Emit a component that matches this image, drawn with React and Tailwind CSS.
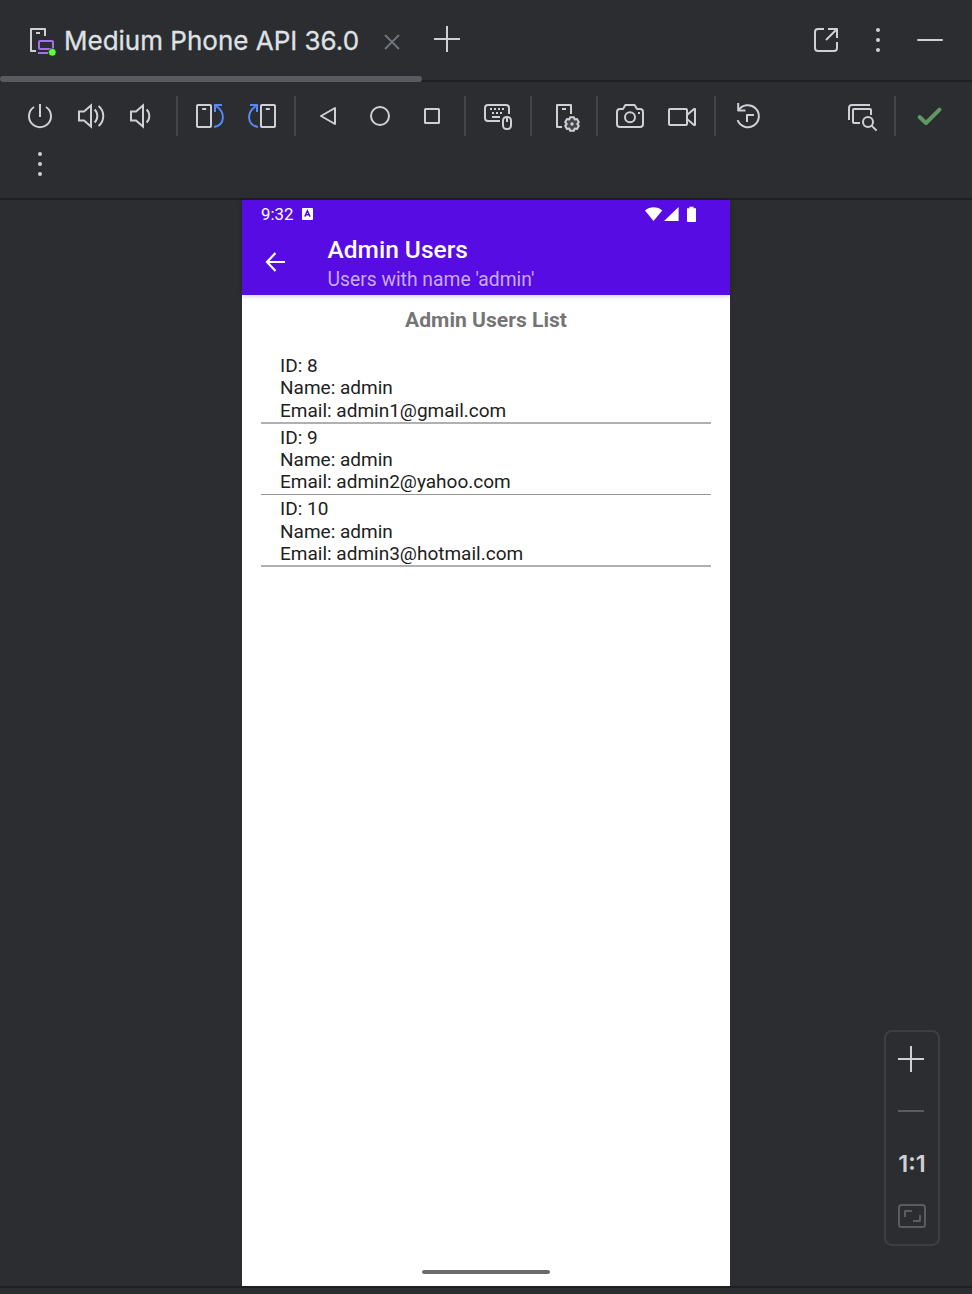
const FG = "#ced0d6";

function Icon({ children, className = "" }) {
  return (
    <svg
      viewBox="0 0 32 32"
      className={`h-8 w-8 shrink-0 ${className}`}
      fill="none"
      stroke={FG}
      strokeWidth="2"
      strokeLinejoin="round"
    >
      {children}
    </svg>
  );
}

function Tool({ children, label }) {
  return (
    <button aria-label={label} className="flex h-[52px] w-[52px] shrink-0 items-center justify-center">
      <Icon>{children}</Icon>
    </button>
  );
}

function Separator() {
  return <div className="mx-1.5 h-10 w-0.5 shrink-0 bg-[#43454a]" />;
}

function Dots() {
  return (
    <g fill={FG} stroke="none">
      <circle cx="16" cy="6" r="2" />
      <circle cx="16" cy="16" r="2" />
      <circle cx="16" cy="26" r="2" />
    </g>
  );
}

function RotateShape() {
  return (
    <>
      <rect x="3" y="5" width="14" height="22" rx="1" />
      <path d="M8.2 9h4" />
      <g stroke="#548af7" strokeLinejoin="miter">
        <path d="M28 5h-7v7" />
        <path d="M22 6C31.5 12 31.5 25 20 27" />
      </g>
    </>
  );
}

function gearPoints(cx, cy) {
  const pts = [];
  for (let k = 0; k < 6; k++) {
    for (const [offset, r] of [[-15, 7.1], [15, 7.1], [30, 5.3]]) {
      const a = ((60 * k + offset - 90) * Math.PI) / 180;
      pts.push(`${(cx + r * Math.cos(a)).toFixed(2)},${(cy + r * Math.sin(a)).toFixed(2)}`);
    }
  }
  return pts.join(" ");
}

function TabBar() {
  return (
    <header className="flex h-[82px] shrink-0 flex-col justify-between border-b-2 border-[#1e1f22]">
      <div className="flex h-20 shrink-0 items-center px-[26px]">
        <Icon>
          <path d="M10 27H5V5h14v7" />
          <path d="M10 9h4" />
          <rect x="13" y="17" width="14" height="8" rx="1" stroke="#a571e6" />
          <path d="M12 29h10" stroke="#a571e6" />
          <circle cx="26.3" cy="28.3" r="3.9" fill="#5fff3d" stroke="#1f3d22" strokeWidth="0.8" />
        </Icon>
        <span className="ml-1.5 w-[300px] pt-0.5 text-[26px] leading-8 whitespace-nowrap text-[#dfe1e5] [-webkit-text-stroke:0.3px_#dfe1e5]">
          Medium Phone API 36.0
        </span>
        <Icon className="ml-3">
          <path d="M9 11l14 14M23 11l-14 14" stroke="#6f737a" />
        </Icon>
        <Icon className="ml-[23px]">
          <path d="M16 2v26M3 15h26" />
        </Icon>
        <div className="flex-1" />
        <Icon className="mr-5">
          <path d="M14 5H8a3 3 0 0 0-3 3v16a3 3 0 0 0 3 3h16a3 3 0 0 0 3-3v-6M18 5h9v9M27 5L16 16" />
        </Icon>
        <Icon className="mr-5">
          <Dots />
        </Icon>
        <Icon>
          <path d="M4 16h24" strokeLinecap="round" />
        </Icon>
      </div>
      <div className="-mt-1 h-1.5 w-[422px] shrink-0 rounded-full bg-[#5a5b60]" />
    </header>
  );
}

function Toolbar() {
  return (
    <div className="h-[118px] shrink-0 border-b-2 border-[#1e1f22] pt-2 pr-[18px] pl-3.5">
      <div className="flex h-[52px] items-center">
        <Tool label="Power">
          <path d="M10 7a11 11 0 1 0 12 0M16 4v13" />
        </Tool>
        <Tool label="Volume up">
          <path d="M3 11.5h5l7-6v21l-7-6H3z" strokeLinejoin="miter" />
          <path d="M18.6 9.5c3.6 3.4 3.6 9.6 0 13M22.6 6c6.2 5.2 6.2 14.8 0 20" />
        </Tool>
        <Tool label="Volume down">
          <path d="M3 11.5h5l7-6v21l-7-6H3z" strokeLinejoin="miter" />
          <path d="M18.6 9.5c3.6 3.4 3.6 9.6 0 13" />
        </Tool>
        <Separator />
        <Tool label="Rotate left">
          <RotateShape />
        </Tool>
        <Tool label="Rotate right">
          <g transform="translate(32 0) scale(-1 1)">
            <RotateShape />
          </g>
        </Tool>
        <Separator />
        <Tool label="Back">
          <path d="M9 16l14-8v16z" />
        </Tool>
        <Tool label="Home">
          <circle cx="16" cy="16" r="9" />
        </Tool>
        <Tool label="Overview">
          <rect x="9" y="9" width="14" height="14" rx="0.5" />
        </Tool>
        <Separator />
        <Tool label="Hardware input">
          <path d="M18 21H6a3 3 0 0 1-3-3V8a3 3 0 0 1 3-3h18a3 3 0 0 1 3 3v6" />
          <path d="M8 9h2m2 0h2m2 0h2m2 0h2M10 13h2m2 0h2m2 0h2M10 17h8" />
          <rect x="21" y="17" width="8" height="12" rx="3.5" />
          <path d="M25 17v5" />
        </Tool>
        <Separator />
        <Tool label="Device settings">
          <path d="M14 27H9V5h14v9M14 9h4" />
          <polygon points={gearPoints(24, 24)} fill="#43454a" />
          <circle cx="24" cy="24" r="1.7" fill={FG} stroke="none" />
        </Tool>
        <Separator />
        <Tool label="Take screenshot">
          <path d="M6 9h3l2.4-4h9.2L23 9h3a3 3 0 0 1 3 3v12a3 3 0 0 1-3 3H6a3 3 0 0 1-3-3V12a3 3 0 0 1 3-3z" />
          <circle cx="16" cy="17.3" r="5" />
          <path d="M24 13h2" />
        </Tool>
        <Tool label="Record screen">
          <rect x="3" y="9" width="18" height="16" rx="1" />
          <path d="M21 15l7-6h1v16h-1l-7-6" />
        </Tool>
        <Separator />
        <Tool label="Snapshots">
          <path d="M6.2 3v7.5h7.3" />
          <path d="M6.4 10.6A11 11 0 1 1 5.6 20.2M15 22v-7h7" />
        </Tool>
        <div className="flex-1" />
        <Tool label="Layout inspector">
          <path d="M3 20V8a3 3 0 0 1 3-3h18" />
          <path d="M14 23H8a1 1 0 0 1-1-1V10a1 1 0 0 1 1-1h16a1 1 0 0 1 1 1v5" />
          <circle cx="22" cy="22" r="5" />
          <path d="M25.6 25.6l5 5" />
        </Tool>
        <Separator />
        <Tool label="Status">
          <path d="M7.6 17l6.4 6L27.5 9.6" stroke="#5f9860" strokeWidth="4" strokeLinecap="round" />
        </Tool>
      </div>
      <div className="-mt-1 flex h-[52px]">
        <Tool label="More">
          <Dots />
        </Tool>
      </div>
    </div>
  );
}

const users = [
  { id: 8, name: "admin", email: "admin1@gmail.com" },
  { id: 9, name: "admin", email: "admin2@yahoo.com" },
  { id: 10, name: "admin", email: "admin3@hotmail.com" },
];

function Phone() {
  return (
    <div className="flex w-[488px] flex-col bg-white font-[Roboto,sans-serif]">
      <div className="flex h-[95px] shrink-0 flex-col bg-[#560ce2] text-white shadow-[0_1px_5px_rgba(0,0,0,0.22)]">
        <div className="flex h-7 items-center pr-[33px] pl-[19px]">
          <span className="text-[16.8px] leading-[27px]">9:32</span>
          <svg viewBox="0 0 11 12" className="ml-[9px] h-3 w-[11px]">
            <rect width="11" height="12" rx="1" fill="#fff" />
            <path d="M2.8 8.6L5.4 2.8 8 8.6M3.8 6.8h3.2" stroke="#560ce2" strokeWidth="1.5" fill="none" />
          </svg>
          <div className="flex-1" />
          <svg viewBox="0 0 52 16" className="h-4 w-[52px]" fill="#fff">
            <path d="M0 4.4C5 .2 12.4 .2 17.2 4.4L8.5 15z" />
            <path d="M33.6 1v14H19z" />
            <path d="M42 2.2h2.4V.8h4.2v1.4h2.4v13a.8.8 0 0 1-.8.8h-7.4a.8.8 0 0 1-.8-.8z" />
          </svg>
        </div>
        <div className="flex h-[67px] items-center pl-[23px]">
          <svg viewBox="0 0 20 20" className="h-5 w-5" fill="none" stroke="#fff" strokeWidth="2.2">
            <path d="M10.5 1L2 10 10.5 19M2 10h18" />
          </svg>
          <div className="ml-[42.5px] flex flex-col pt-2">
            <span className="text-[24.5px] leading-[28px] font-medium">Admin Users</span>
            <span className="mt-px text-[19.3px] leading-[30px] text-[#c9abf4]">Users with name 'admin'</span>
          </div>
        </div>
      </div>
      <h1 className="mt-3 text-center text-[21.1px] leading-[26px] font-bold text-[#757575]">
        Admin Users List
      </h1>
      <ul className="mx-[19px] mt-[19px] text-[19px] leading-[22.2px] text-[#212121]">
        {users.map((u) => (
          <li
            key={u.id}
            className="h-[71.6px] border-b border-[#959595] pt-[3.2px] pl-[19px] odd:border-b-2 odd:border-[#b0b0b0]"
          >
            <p>ID: {u.id}</p>
            <p>Name: {u.name}</p>
            <p>Email: {u.email}</p>
          </li>
        ))}
      </ul>
      <div className="mx-auto mt-auto mb-3 h-1 w-32 rounded-sm bg-[#6b6b6b]" />
    </div>
  );
}

function ZoomPanel() {
  return (
    <div className="mr-8 mb-10 flex h-[216px] w-14 flex-col items-center self-end rounded-lg border-2 border-[#3c3e40] pt-[11px]">
      <Icon>
        <path d="M15 3v26M2 16h26" />
      </Icon>
      <Icon className="mt-5">
        <path d="M2 16h26" stroke="#5a5c60" />
      </Icon>
      <span className="mt-[21px] text-[23.5px] leading-8 font-semibold text-[#ced0d6]">1:1</span>
      <Icon className="mt-5">
        <rect x="3" y="5" width="26" height="22" rx="2.5" stroke="#5a5c60" />
        <path d="M9 17v-6h7M24 15v6h-7" stroke="#5a5c60" />
      </Icon>
    </div>
  );
}

export default function App() {
  return (
    <div className="flex h-[1294px] w-[972px] flex-col overflow-hidden bg-[#2b2d30] font-[Inter,sans-serif]">
      <TabBar />
      <Toolbar />
      <main className="flex h-[1086px] shrink-0">
        <div className="w-[242px]" />
        <Phone />
        <div className="flex flex-1 justify-end">
          <ZoomPanel />
        </div>
      </main>
      <footer className="flex-1 border-t-2 border-[#1e1f22]" />
    </div>
  );
}
